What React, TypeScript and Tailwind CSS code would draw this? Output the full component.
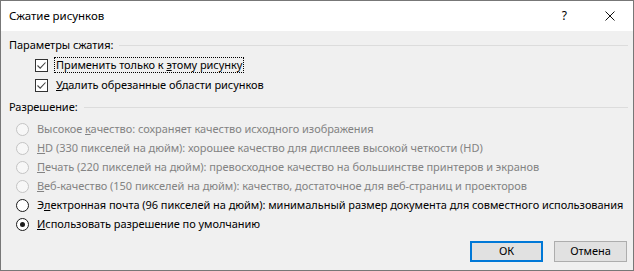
import React from 'react';

const font = "font-['Segoe_UI','Noto_Sans',sans-serif]";

const Check: React.FC = () => (
  <span className="w-[13px] h-[13px] border border-[#333333] bg-white flex items-center justify-center shrink-0">
    <svg width="11" height="11" viewBox="0 0 11 11">
      <path d="M1.5 5.5 L4.2 8.2 L9.5 2.5" fill="none" stroke="#444444" strokeWidth="1.1" />
    </svg>
  </span>
);

const Radio: React.FC<{ checked?: boolean; disabled?: boolean }> = ({ checked, disabled }) => (
  <span
    className={
      disabled
        ? 'w-[13px] h-[13px] rounded-full border border-[#c4c4c4] bg-[#f7f7f7] flex items-center justify-center shrink-0'
        : 'w-[13px] h-[13px] rounded-full border border-[#1a1a1a] bg-white flex items-center justify-center shrink-0'
    }
  >
    {checked && <span className="w-[5px] h-[5px] rounded-full bg-[#1a1a1a]" />}
  </span>
);

const Heading: React.FC<{ children: React.ReactNode }> = ({ children }) => (
  <div className="h-[16px] flex items-center">
    <span className="whitespace-nowrap">{children}</span>
    <span className="flex-1 h-px bg-[#dcdcdc] ml-[6px]" />
  </div>
);

const RadioRow: React.FC<{ children: React.ReactNode; checked?: boolean; disabled?: boolean }> = ({
  children,
  checked,
  disabled,
}) => (
  <div className="h-[16px] flex items-center pl-[7px]">
    <Radio checked={checked} disabled={disabled} />
    <span className={disabled ? 'ml-[8px] whitespace-nowrap text-[#838383]' : 'ml-[8px] whitespace-nowrap text-black'}>
      {children}
    </span>
  </div>
);

export default function App() {
  return (
    <div className={`w-[634px] h-[271px] border border-[#777777] bg-[#f0f0f0] flex flex-col text-[11px] tracking-[-0.05px] text-black ${font}`}>
      <div className="h-[30px] bg-white flex items-center pl-[8px] shrink-0">
        <span className="flex-1 text-[11.5px]">Сжатие рисунков</span>
        <span className="text-[12px] mr-[37px]">?</span>
        <svg width="12" height="12" viewBox="0 0 12 12" className="mr-[17px]">
          <path d="M1.5 1.5 L10.5 10.5 M10.5 1.5 L1.5 10.5" stroke="#111111" strokeWidth="1" />
        </svg>
      </div>
      <div className="flex flex-col pl-[8px] pr-[5px] pt-[6px]">
        <Heading>Параметры сжатия:</Heading>
        <div className="h-[16px] mt-[4px] flex items-center pl-[26px]">
          <Check />
          <span className="ml-[6px] px-[1px] border border-dotted border-black whitespace-nowrap leading-[14px]">
            Применить только к <u>э</u>тому рисунку
          </span>
        </div>
        <div className="h-[16px] mt-[4px] flex items-center pl-[26px]">
          <Check />
          <span className="ml-[8px] whitespace-nowrap">
            <u>У</u>далить обрезанные области рисунков
          </span>
        </div>
        <div className="mt-[6px]">
          <Heading>Разрешение:</Heading>
        </div>
        <div className="flex flex-col gap-[3px] mt-[6px]">
          <RadioRow disabled>
            Высокое <u>к</u>ачество: сохраняет качество исходного изображения
          </RadioRow>
          <RadioRow disabled>
            <u>H</u>D (330 пикселей на дюйм): хорошее качество для дисплеев высокой четкости (HD)
          </RadioRow>
          <RadioRow disabled>
            <u>П</u>ечать (220 пикселей на дюйм): превосходное качество на большинстве принтеров и экранов
          </RadioRow>
          <RadioRow disabled>
            <u>В</u>еб-качество (150 пикселей на дюйм): качество, достаточное для веб-страниц и проекторов
          </RadioRow>
          <RadioRow>
            Э<u>л</u>ектронная почта (96 пикселей на дюйм): минимальный размер документа для совместного использования
          </RadioRow>
          <RadioRow checked>
            <u>И</u>спользовать разрешение по умолчанию
          </RadioRow>
        </div>
        <div className="flex justify-end gap-[11px] mt-[9px] pr-[1px]">
          <button className="w-[73px] h-[21px] border-2 border-[#0078d7] bg-[#e1e1e1] flex items-center justify-center">
            ОК
          </button>
          <button className="w-[73px] h-[21px] border border-[#adadad] bg-[#e1e1e1] flex items-center justify-center">
            Отмена
          </button>
        </div>
      </div>
    </div>
  );
}
